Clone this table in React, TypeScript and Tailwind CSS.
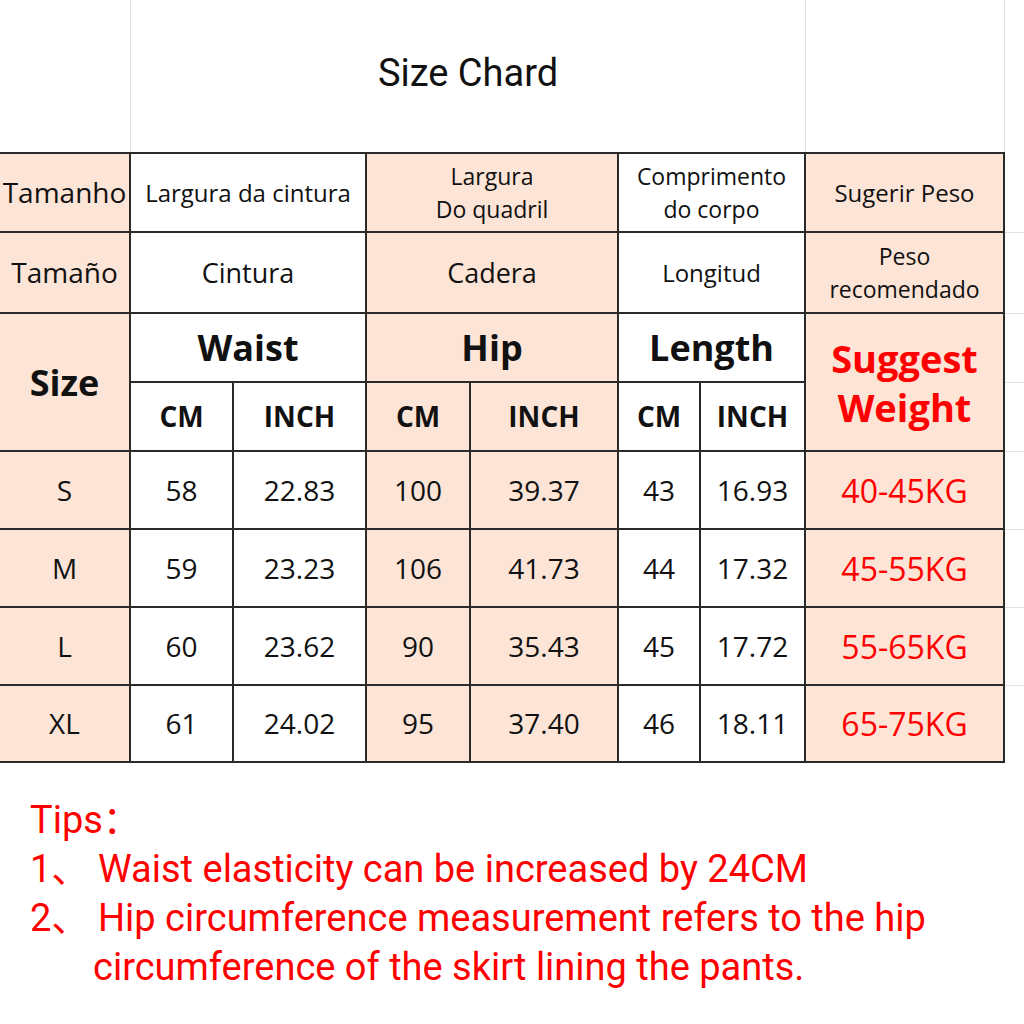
const pink = "bg-[#fce4d6]";
const cell =
  "flex items-center justify-center text-center border-r-2 border-b-2 border-[#2a2a2a] text-[#111] leading-[33px]";

const rows = [
  ["S", "58", "22.83", "100", "39.37", "43", "16.93", "40-45KG"],
  ["M", "59", "23.23", "106", "41.73", "44", "17.32", "45-55KG"],
  ["L", "60", "23.62", "90", "35.43", "45", "17.72", "55-65KG"],
  ["XL", "61", "24.02", "95", "37.40", "46", "18.11", "65-75KG"],
];

const colBg = (i: number) => (i === 0 || i === 3 || i === 4 || i === 7 ? pink : "bg-white");

export default function App() {
  return (
    <div className="w-[1024px] h-[1024px] bg-white overflow-hidden font-['Open_Sans',sans-serif]">
      {/* title row */}
      <div className="flex h-[152px]">
        <div className="w-[131px] border-r border-[#e2e2e2]" />
        <div className="w-[675px] border-r border-[#e2e2e2] flex items-center justify-center pb-[6px]">
          <span className="text-[38px] text-[#111] font-['Roboto',sans-serif]">Size Chard</span>
        </div>
        <div className="w-[199px] border-r border-[#e2e2e2]" />
        <div className="flex-1" />
      </div>

      <div className="flex">
        <div className="grid w-[1005px] border-t-2 border-[#2a2a2a] grid-cols-[131px_103px_133px_104px_148px_82px_105px_199px] grid-rows-[79px_81px_69px_69px_78px_78px_78px_77px]">
          {/* row 1 */}
          <div className={`${cell} ${pink} text-[28px]`}>Tamanho</div>
          <div className={`${cell} col-span-2 text-[24px]`}>Largura da cintura</div>
          <div className={`${cell} ${pink} col-span-2 text-[23px]`}>
            Largura
            <br />
            Do quadril
          </div>
          <div className={`${cell} col-span-2 text-[23px]`}>
            Comprimento
            <br />
            do corpo
          </div>
          <div className={`${cell} ${pink} text-[24px]`}>Sugerir Peso</div>

          {/* row 2 */}
          <div className={`${cell} ${pink} text-[28px]`}>Tamaño</div>
          <div className={`${cell} col-span-2 text-[27px]`}>Cintura</div>
          <div className={`${cell} ${pink} col-span-2 text-[27px]`}>Cadera</div>
          <div className={`${cell} col-span-2 text-[24px]`}>Longitud</div>
          <div className={`${cell} ${pink} text-[23px]`}>
            Peso
            <br />
            recomendado
          </div>

          {/* row 3 & 4 */}
          <div className={`${cell} ${pink} row-span-2 text-[36px] font-bold`}>Size</div>
          <div className={`${cell} col-span-2 text-[36px] font-bold`}>Waist</div>
          <div className={`${cell} ${pink} col-span-2 text-[36px] font-bold`}>Hip</div>
          <div className={`${cell} col-span-2 text-[36px] font-bold`}>Length</div>
          <div className={`${cell} ${pink} row-span-2 text-[38px] font-bold text-[#ff0000] leading-[49px] pt-[2px]`}>
            Suggest
            <br />
            Weight
          </div>
          <div className={`${cell} text-[28px] font-bold`}>CM</div>
          <div className={`${cell} text-[28px] font-bold`}>INCH</div>
          <div className={`${cell} ${pink} text-[28px] font-bold`}>CM</div>
          <div className={`${cell} ${pink} text-[28px] font-bold`}>INCH</div>
          <div className={`${cell} text-[28px] font-bold`}>CM</div>
          <div className={`${cell} text-[28px] font-bold`}>INCH</div>

          {/* data rows */}
          {rows.map((r) =>
            r.map((v, i) => (
              <div
                key={r[0] + i}
                className={`${cell} ${colBg(i)} ${i === 7 ? "text-[32px] text-[#ff0000]" : "text-[28px]"}`}
              >
                {v}
              </div>
            ))
          )}
        </div>

        {/* spreadsheet gridlines to the right */}
        <div className="flex-1 flex flex-col">
          <div className="h-[81px] border-b border-[#e2e2e2]" />
          <div className="h-[81px] border-b border-[#e2e2e2]" />
          <div className="h-[69px] border-b border-[#e2e2e2]" />
          <div className="h-[69px] border-b border-[#e2e2e2]" />
          <div className="h-[78px] border-b border-[#e2e2e2]" />
          <div className="h-[78px] border-b border-[#e2e2e2]" />
          <div className="h-[78px] border-b border-[#e2e2e2]" />
        </div>
      </div>

      {/* tips */}
      <div className="mt-[33px] pl-[30px] text-[#ff0000] text-[38px] leading-[49px] font-['Roboto','Noto_Sans_CJK_SC',sans-serif]">
        <div>Tips：</div>
        <div className="flex">
          <span className="w-[68px]">1、</span>
          <span>Waist elasticity can be increased by 24CM</span>
        </div>
        <div className="flex">
          <span className="w-[68px]">2、</span>
          <span>Hip circumference measurement refers to the hip</span>
        </div>
        <div className="pl-[63px]">circumference of the skirt lining the pants.</div>
      </div>
    </div>
  );
}
